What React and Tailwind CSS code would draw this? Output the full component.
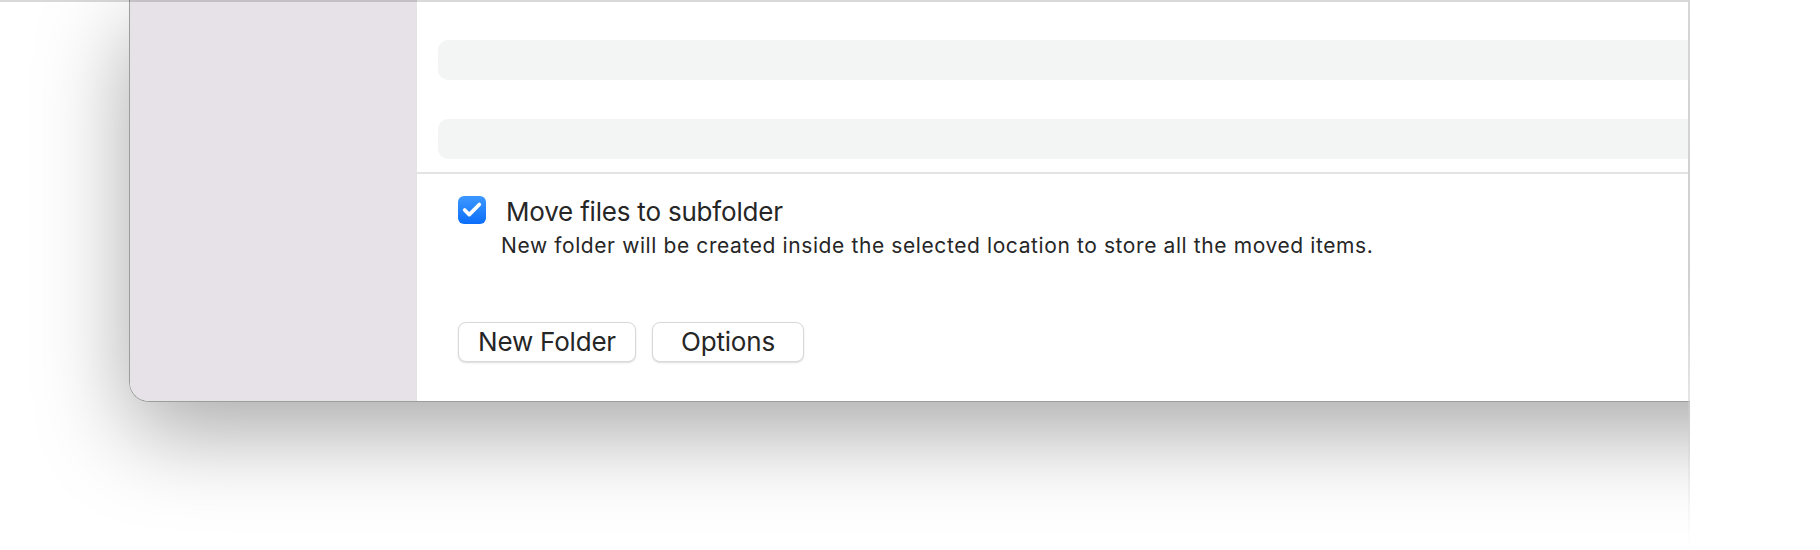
import { Check } from "lucide-react";

function Row() {
  return <div className="h-[40px] w-full rounded-[10px] bg-[#f3f4f4]" />;
}

function Button({ children, width }) {
  return (
    <button
      className={`h-[40px] ${width} rounded-[8px] border border-[#d9d9d9] bg-white text-[26px] leading-none tracking-[-0.2px] text-[#262626] shadow-[0_1px_2px_rgba(0,0,0,0.14)]`}
    >
      {children}
    </button>
  );
}

export default function App() {
  return (
    <div className="relative flex h-[550px] w-[1820px] overflow-hidden bg-white font-['Inter','Noto_Sans',sans-serif]">
      <div className="h-[550px] w-[1690px] shrink-0 overflow-hidden bg-white">
        <div className="ml-[129px] flex h-[402px] w-[1700px] overflow-hidden rounded-bl-[20px] border-b border-l border-[#9d9d9d] shadow-[0_30px_90px_rgba(0,0,0,0.34)]">
          <aside className="w-[286px] shrink-0 bg-[#e7e2e7]" />
          <main className="flex flex-1 flex-col border-l border-[#e4e2e4] bg-white">
            <div className="flex flex-col gap-[39px] pl-[21px] pt-[40px] pb-[13px]">
              <Row />
              <Row />
            </div>
            <div className="h-[2px] bg-[#e3e3e3]" />
            <div className="flex flex-col pl-[41px] pt-[22px]">
              <div className="flex items-start gap-[20px]">
                <span className="grid h-[28px] w-[28px] place-items-center rounded-[6px] bg-gradient-to-b from-[#3c98ff] to-[#0a6dfa]">
                  <Check className="h-[22px] w-[22px] text-white" strokeWidth={4} />
                </span>
                <span className="text-[26px] leading-[32px] tracking-[-0.2px] text-[#262626]">Move files to subfolder</span>
              </div>
              <p className="ml-[43px] mt-[4px] text-[21px] leading-[28px] tracking-[0.6px] text-[#262626]">
                New folder will be created inside the selected location to store all the moved items.
              </p>
              <div className="mt-[62px] flex gap-[16px]">
                <Button width="w-[178px]">New Folder</Button>
                <Button width="w-[152px]">Options</Button>
              </div>
            </div>
          </main>
        </div>
      </div>
      <div className="absolute left-0 top-0 h-[2px] w-[1690px] bg-black/15" />
      <div className="absolute left-[1688px] top-0 h-[550px] w-[2px] bg-gradient-to-b from-[#d6d6d6] via-[#d0d0d0] to-transparent" />
    </div>
  );
}
